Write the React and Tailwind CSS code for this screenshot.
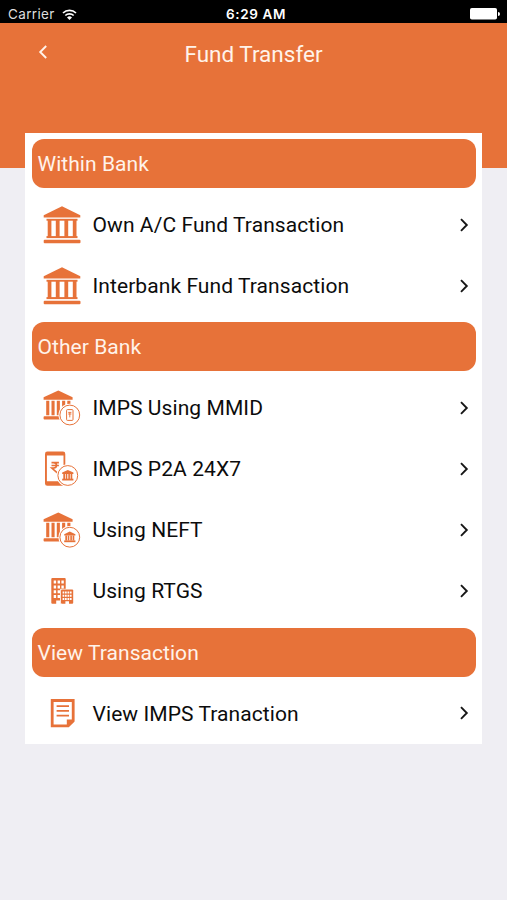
const ORANGE = "#e77239";

function Bank() {
  return (
    <g fill={ORANGE}>
      <path d="M22 3.2 L40.3 12.2 V14.4 H3.7 V12.2 Z" />
      <rect x="6.5" y="15.8" width="31" height="1.9" />
      <path d="M7.7 17h3.7v17H7.7zM15.8 17h3.8v17h-3.8zM24.4 17h3.8v17h-3.8zM32.8 17h3.7v17h-3.7z" />
      <rect x="6.5" y="33.1" width="31" height="2" />
      <rect x="3.7" y="36.7" width="36.8" height="3.6" rx="1" />
    </g>
  );
}

function SmallBank() {
  return (
    <g fill={ORANGE}>
      <path d="M18.3 4.6 L32.6 11.3 V13.8 H3.6 V11.3 Z" />
      <path d="M6.2 14.8h3.1v14.4H6.2zM11.5 14.8h3.1v14.4h-3.1zM16.8 14.8h3.1v14.4h-3.1zM22.1 14.8h3.1v14.4h-3.1zM27.3 14.8h3.1v14.4h-3.1z" />
      <rect x="3.6" y="30.3" width="22.4" height="3.2" rx="0.8" />
    </g>
  );
}

function Badge({ cx, cy, children }) {
  return (
    <g>
      <circle cx={cx} cy={cy} r="11.3" fill="#fff" />
      <circle cx={cx} cy={cy} r="9.9" fill="#fff" stroke={ORANGE} strokeWidth="1" />
      <g transform={`translate(${cx} ${cy})`}>{children}</g>
    </g>
  );
}

function MiniBank() {
  return (
    <g fill={ORANGE}>
      <path d="M0-5.6 L5.6-2.9V-1.6H-5.6V-2.9Z" />
      <path d="M-4.5-1.6h1.7v5h-1.7zM-2.1-1.6h1.6v5h-1.6zM.5-1.6h1.6v5H.5zM2.8-1.6h1.7v5H2.8z" />
      <rect x="-5.6" y="3.2" width="11.2" height="1.8" />
    </g>
  );
}

function Icon({ name }) {
  return (
    <svg className="h-11 w-11 shrink-0" viewBox="0 0 44 44" fill="none">
      {name === "bank" && <Bank />}
      {name === "mmid" && (
        <>
          <SmallBank />
          <Badge cx={29.8} cy={29}>
            <rect x="-3.2" y="-5.4" width="6.4" height="10.8" rx="0.8" stroke={ORANGE} strokeWidth="1" />
            <path d="M-1.6-2.6h3.2M-1.6-1h3.2M0-2.6v5" stroke={ORANGE} strokeWidth="0.9" />
          </Badge>
        </>
      )}
      {name === "phone" && (
        <>
          <path
            fillRule="evenodd"
            fill={ORANGE}
            d="M7.3 4.6H23a2.3 2.3 0 0 1 2.3 2.3v29.5a2.3 2.3 0 0 1-2.3 2.3H7.3A2.3 2.3 0 0 1 5 36.4V6.9a2.3 2.3 0 0 1 2.3-2.3ZM6.9 8.6v25.6h16.6V8.6Z"
          />
          <path d="M11.5 15.6h7.4M11.5 18.5h7.4M12 15.6h1.5c4 0 4 5.5 0 5.5h-1.7l5.5 4.8" stroke={ORANGE} strokeWidth="1.6" />
          <Badge cx={27.8} cy={28.5}>
            <MiniBank />
          </Badge>
        </>
      )}
      {name === "neft" && (
        <>
          <SmallBank />
          <Badge cx={29.8} cy={29.2}>
            <MiniBank />
          </Badge>
        </>
      )}
      {name === "buildings" && (
        <>
          <rect x="11.3" y="8.9" width="14.4" height="25.9" rx="1" fill={ORANGE} />
          <path
            fill="#fff"
            d="M13.7 11.6h2.4v3h-2.4zM17.6 11.6H20v3h-2.4zM21.4 11.6h2.4v3h-2.4zM13.7 16.4h2.4v3h-2.4zM17.6 16.4H20v3h-2.4zM21.4 16.4h2.4v3h-2.4zM13.7 21.2h2.4v3h-2.4zM17.6 21.2H20v3h-2.4zM13.7 26h2.4v3h-2.4zM17.6 26H20v3h-2.4zM16.2 31.4h4v3.6h-4z"
          />
          <path d="M20.2 19.8h13.5v15.4H20.2z" fill="#fff" />
          <rect x="21" y="20.6" width="12.2" height="14.2" rx="1" fill={ORANGE} />
          <path
            fill="#fff"
            d="M22.6 22.5h1.7v2h-1.7zM25 22.5h1.7v2H25zM27.5 22.5h1.7v2h-1.7zM29.9 22.5h1.7v2h-1.7zM22.6 25.8h1.7v2h-1.7zM25 25.8h1.7v2H25zM27.5 25.8h1.7v2h-1.7zM29.9 25.8h1.7v2h-1.7zM22.6 29.1h1.7v2h-1.7zM25 29.1h1.7v2H25zM27.5 29.1h1.7v2h-1.7zM29.9 29.1h1.7v2h-1.7zM25.4 32.3h3.6V35h-3.6z"
          />
        </>
      )}
      {name === "document" && (
        <>
          <path d="M12.2 9.5H33.2V29.8L28.2 34.8H12.2Z" stroke={ORANGE} strokeWidth="2.8" />
          <path d="M26.8 35V28.6H34V30.5L29.3 35Z" fill={ORANGE} />
          <path d="M16.6 15.2H29M16.6 19.9H29M16.6 24.6H29" stroke={ORANGE} strokeWidth="1.7" />
        </>
      )}
    </svg>
  );
}

function Section({ title }) {
  return (
    <div className="flex h-[61.1px] items-center pl-[6.5px] pr-1.5">
      <h2 className="flex h-[49px] w-full items-center rounded-xl bg-[#e77239] pl-1.5 pt-0.5 text-[21px] tracking-[0.05px] text-[#fff3ea]">
        {title}
      </h2>
    </div>
  );
}

function Row({ icon, label }) {
  return (
    <div className="flex h-[61.1px] items-center pl-[15px] pr-[13px]">
      <Icon name={icon} />
      <span className="ml-[8.5px] flex-1 pt-0.5 text-[21px] tracking-[0.08px] text-[#0c0c0c]">{label}</span>
      <svg className="h-3.5 w-2.5" viewBox="0 0 10 14" fill="none">
        <path d="M2 1.2 L7.8 7 L2 12.8" stroke="#161616" strokeWidth="1.9" />
      </svg>
    </div>
  );
}

export default function App() {
  return (
    <div className="flex h-[900px] w-[507px] flex-col overflow-hidden bg-[#efeef3] font-['Roboto',sans-serif]">
      <div className="grid h-[23px] shrink-0 grid-cols-[1fr_80px_1fr] items-center bg-black pl-2 pr-[7px] pt-[4px] font-['Inter',sans-serif] text-[13.5px] text-[#dedede]">
        <div className="flex items-center gap-[7px]">
          <span className="tracking-[0.35px]">Carrier</span>
          <svg className="h-[11px] w-[15px]" viewBox="0 0 15 11" fill="none">
            <path d="M1 4a9.2 9.2 0 0 1 13 0M3.3 6.5a6 6 0 0 1 8.4 0" stroke="#fff" strokeWidth="1.7" />
            <path d="M7.5 11 L5 8.5a3.6 3.6 0 0 1 5 0Z" fill="#fff" />
          </svg>
        </div>
        <span className="pl-1 text-center font-semibold tracking-[0.65px] text-white">6:29 AM</span>
        <svg className="h-3 w-[30px] justify-self-end" viewBox="0 0 30 12">
          <rect x="0" y="0" width="27" height="11.5" rx="1.8" fill="#fff" />
          <path d="M28 4a2 2 0 0 1 0 4Z" fill="#fff" />
        </svg>
      </div>
      <header className="grid h-[145px] shrink-0 grid-cols-[60px_1fr_60px] items-start bg-[#e77239] pt-[15px] text-[#fff3ea]">
        <svg className="ml-[38px] mt-[7px] h-3.5 w-2.5" viewBox="0 0 10 14" fill="none">
          <path d="M8.2 1 L2.2 7 L8.2 13" stroke="#fff3ea" strokeWidth="1.9" />
        </svg>
        <h1 className="text-center text-[22.5px] leading-8">Fund Transfer</h1>
      </header>
      <main className="mx-[25px] -mt-[35px] bg-white">
        <Section title="Within Bank" />
        <Row icon="bank" label="Own A/C Fund Transaction" />
        <Row icon="bank" label="Interbank Fund Transaction" />
        <Section title="Other Bank" />
        <Row icon="mmid" label="IMPS Using MMID" />
        <Row icon="phone" label="IMPS P2A 24X7" />
        <Row icon="neft" label="Using NEFT" />
        <Row icon="buildings" label="Using RTGS" />
        <Section title="View Transaction" />
        <Row icon="document" label="View IMPS Tranaction" />
      </main>
    </div>
  );
}
